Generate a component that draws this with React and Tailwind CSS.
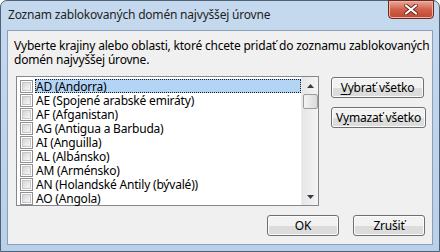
import React from "react";

const items = [
  "AD (Andorra)",
  "AE (Spojené arabské emiráty)",
  "AF (Afganistan)",
  "AG (Antigua a Barbuda)",
  "AI (Anguilla)",
  "AL (Albánsko)",
  "AM (Arménsko)",
  "AN (Holandské Antily (bývalé))",
  "AO (Angola)",
];

const Checkbox = () => (
  <span className="w-[13px] h-[13px] shrink-0 border border-[#8f8f8f] bg-white p-[1px]">
    <span className="block w-full h-full border border-[#c6c6c6] bg-gradient-to-br from-[#d5d5d5] to-[#f7f7f7]" />
  </span>
);

const WinButton = ({ children, className = "" }) => (
  <button
    className={`h-[21px] border border-[#707070] rounded-[3px] bg-gradient-to-b from-[#f2f2f2] from-50% to-[#dcdcdc] to-50% text-[12px] text-black leading-none tracking-[-0.2px] shadow-[inset_0_0_0_1px_#fbfbfb] ${className}`}
  >
    {children}
  </button>
);

const App = () => {
  return (
    <div
      className="w-[440px] h-[252px] flex flex-col rounded-t-[7px] border border-[#4d6178] bg-gradient-to-b from-[#c5d9ee] to-[#b9d0e9] text-black"
      style={{ fontFamily: '"Noto Sans", "Open Sans", sans-serif' }}
    >
      {/* Title bar */}
      <div className="h-[29px] flex items-start justify-between pl-[7px] pr-[5px]">
        <span className="mt-[7px] text-[12px] leading-[14px] tracking-[-0.2px] text-[#1e1e1e] whitespace-nowrap">
          Zoznam zablokovaných domén najvyššej úrovne
        </span>
        <div className="w-[46px] h-[19px] -mt-px flex items-center justify-center rounded-b-[4px] border border-[#6d2a22] bg-gradient-to-b from-[#e9a99b] via-[#d0614b] to-[#c2452e] shadow-[inset_0_0_0_1px_#eeb3a6]">
          <svg width="14" height="11" viewBox="0 0 14 11">
            <path d="M2 1.5 L12 9.5 M12 1.5 L2 9.5" stroke="#5a2219" strokeWidth="3.6" strokeLinecap="round" />
            <path d="M2 1.5 L12 9.5 M12 1.5 L2 9.5" stroke="#ffffff" strokeWidth="2.2" strokeLinecap="round" />
          </svg>
        </div>
      </div>

      {/* Client area */}
      <div className="mx-[6px] h-[215px] flex flex-col border border-[#8aa0ba] bg-[#f0f0f0] px-[6px] pt-[8px]">
        <p className="text-[12px] leading-[14px] tracking-[-0.2px] whitespace-nowrap">
          Vyberte krajiny alebo oblasti, ktoré chcete pridať do zoznamu zablokovaných
          <br />
          domén najvyššej úrovne.
        </p>

        <div className="mt-[9px] flex items-start">
          {/* List box */}
          <div className="ml-[2px] w-[303px] h-[130px] flex border border-[#828790] bg-white">
            <div className="flex-1 flex flex-col pt-[2px] pl-[3px]">
              {items.map((item, i) => (
                <div key={item} className="h-[14px] flex items-center">
                  <Checkbox />
                  <span
                    className={`ml-[2px] h-[14px] pl-[1px] flex items-center text-[12px] leading-[13px] tracking-[-0.2px] whitespace-nowrap ${
                      i === 0
                        ? "flex-1 bg-[#b3d4f5] outline outline-1 outline-dotted outline-[#1b1b1b] -outline-offset-1"
                        : ""
                    }`}
                  >
                    {item}
                  </span>
                </div>
              ))}
            </div>
            {/* Scrollbar */}
            <div className="w-[17px] h-full flex flex-col items-center bg-gradient-to-r from-[#e6e6e6] to-[#f4f4f4] border-l border-[#ececec]">
              <div className="h-[17px] w-full flex items-center justify-center">
                <svg width="7" height="4" viewBox="0 0 7 4">
                  <path d="M0 4 L3.5 0 L7 4 Z" fill="#3c3c3c" />
                </svg>
              </div>
              <div className="w-[15px] h-[15px] rounded-[2px] border border-[#9c9c9c] bg-gradient-to-r from-[#f4f4f4] to-[#dadada]" />
              <div className="flex-1" />
              <div className="h-[17px] w-full flex items-center justify-center">
                <svg width="7" height="4" viewBox="0 0 7 4">
                  <path d="M0 0 L7 0 L3.5 4 Z" fill="#3c3c3c" />
                </svg>
              </div>
            </div>
          </div>

          {/* Side buttons */}
          <div className="ml-[12px] mt-[1px] flex flex-col gap-[9px]">
            <WinButton className="w-[93px]">
              <span className="underline underline-offset-2">V</span>ybrať všetko
            </WinButton>
            <WinButton className="w-[95px]">
              V<span className="underline underline-offset-2">y</span>mazať všetko
            </WinButton>
          </div>
        </div>

        {/* Footer buttons */}
        <div className="mt-[9px] flex justify-end gap-[14px] pr-[1px]">
          <WinButton className="w-[72px] border-[#3c7fb1] from-[#e5f4fc] to-[#c4e5f6] shadow-[inset_0_0_0_1px_#9fd6f2]">
            OK
          </WinButton>
          <WinButton className="w-[72px]">Zrušiť</WinButton>
        </div>
      </div>
    </div>
  );
};

export default App;
